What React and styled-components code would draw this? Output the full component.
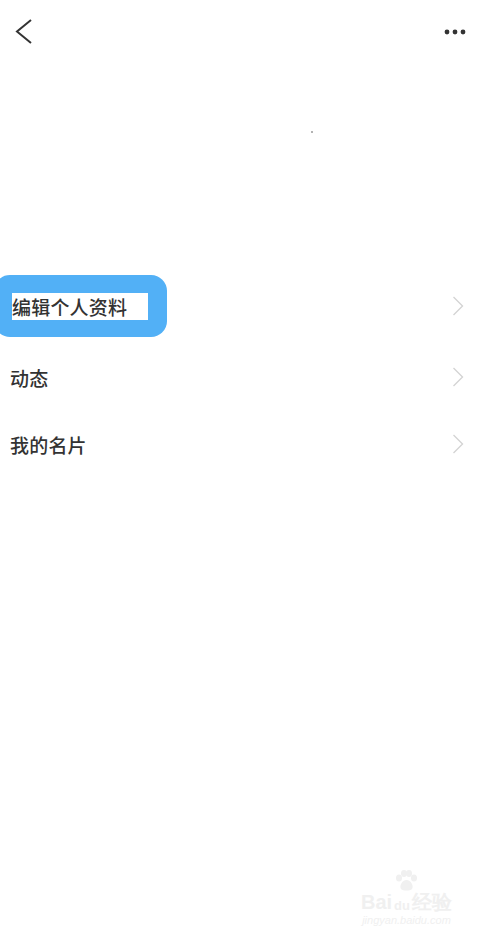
import React from 'react'
import styled, { createGlobalStyle } from 'styled-components'

const GlobalStyle = createGlobalStyle`
  html, body {
    margin: 0;
    padding: 0;
    background: #ffffff;
  }
  body {
    font-family: "Noto Sans CJK SC", "Noto Sans", sans-serif;
  }
`

const Page = styled.div`
  width: 478px;
  height: 936px;
  background: #ffffff;
  display: flex;
  flex-direction: column;
  position: relative;
  overflow: hidden;
`

const Header = styled.div`
  height: 64px;
  display: flex;
  align-items: center;
  justify-content: space-between;
  padding: 0 10px 0 14px;
`

const IconButton = styled.button`
  border: none;
  background: none;
  padding: 0;
  display: flex;
  align-items: center;
  justify-content: center;
  cursor: pointer;
`

const Profile = styled.div`
  height: 206px;
  display: flex;
  justify-content: center;
  padding-top: 67px;
  box-sizing: border-box;
`

const Speck = styled.div`
  width: 2px;
  height: 2px;
  margin-left: 146px;
  border-radius: 1px;
  background: #9a9a9a;
`

const List = styled.div`
  display: flex;
  flex-direction: column;
`

const Row = styled.div`
  height: ${props => props.height}px;
  display: flex;
  align-items: center;
  justify-content: space-between;
  padding: 0 14px 0 10px;
`

const Label = styled.span`
  font-size: 19px;
  color: #333333;
  font-weight: 500;
  letter-spacing: 0.2px;
`

const Highlight = styled.div`
  margin-left: -16px;
  width: 173px;
  height: 62px;
  box-sizing: border-box;
  background: #52b0f6;
  border-radius: 16px;
  display: flex;
  align-items: center;
  padding-left: 18px;
`

const HighlightInner = styled.div`
  width: 136px;
  height: 27px;
  background: #ffffff;
  display: flex;
  align-items: center;
  line-height: 1;
`

const Watermark = styled.div`
  position: absolute;
  right: 26px;
  bottom: 10px;
  display: flex;
  flex-direction: column;
  align-items: center;
  color: #f0f0f0;
  font-family: "Liberation Sans", sans-serif;
`

const BrandLine = styled.div`
  display: flex;
  align-items: flex-end;
  font-size: 20px;
  font-weight: bold;
  line-height: 1;
  gap: 2px;
`

const DuBadge = styled.span`
  display: inline-flex;
  flex-direction: column;
  align-items: center;
  font-size: 13px;
`

const Url = styled.div`
  font-size: 11px;
  font-style: italic;
  margin-top: 2px;
`

const Back = () => (
  <svg width="22" height="26" viewBox="0 0 22 26">
    <polyline points="17,1 3,12.5 17,24" fill="none" stroke="#333" strokeWidth="2" />
  </svg>
)

const More = () => (
  <svg width="24" height="8" viewBox="0 0 24 8">
    <circle cx="3" cy="4" r="2.4" fill="#333" />
    <circle cx="11" cy="4" r="2.4" fill="#333" />
    <circle cx="19" cy="4" r="2.4" fill="#333" />
  </svg>
)

const Chevron = () => (
  <svg width="12" height="20" viewBox="0 0 12 20">
    <polyline points="1.5,1 10.5,10 1.5,19" fill="none" stroke="#d4d4d4" strokeWidth="1.4" />
  </svg>
)

const Paw = () => (
  <svg width="26" height="22" viewBox="0 0 26 22">
    <ellipse cx="6" cy="8" rx="3" ry="3.6" fill="#f0f0f0" />
    <ellipse cx="11" cy="3.5" rx="3" ry="3.4" fill="#f0f0f0" />
    <ellipse cx="16" cy="3.5" rx="3" ry="3.4" fill="#f0f0f0" />
    <ellipse cx="21" cy="8" rx="3" ry="3.6" fill="#f0f0f0" />
    <path d="M13.5 10 C9 10 6 16 8 19 C10 21 17 21 19 19 C21 16 18 10 13.5 10 Z" fill="#f0f0f0" />
  </svg>
)

const items = [
  { label: '编辑个人资料', height: 72, highlight: true },
  { label: '动态', height: 70 },
  { label: '我的名片', height: 64 },
]

export default function App() {
  return (
    <Page>
      <GlobalStyle />
      <Header>
        <IconButton><Back /></IconButton>
        <IconButton><More /></IconButton>
      </Header>
      <Profile>
        <Speck />
      </Profile>
      <List>
        {items.map(item => (
          <Row key={item.label} height={item.height}>
            {item.highlight ? (
              <Highlight>
                <HighlightInner>
                  <Label>{item.label}</Label>
                </HighlightInner>
              </Highlight>
            ) : (
              <Label>{item.label}</Label>
            )}
            <Chevron />
          </Row>
        ))}
      </List>
      <Watermark>
        <Paw />
        <BrandLine>
          <span>Bai</span>
          <DuBadge>du</DuBadge>
          <span>经验</span>
        </BrandLine>
        <Url>jingyan.baidu.com</Url>
      </Watermark>
    </Page>
  )
}
